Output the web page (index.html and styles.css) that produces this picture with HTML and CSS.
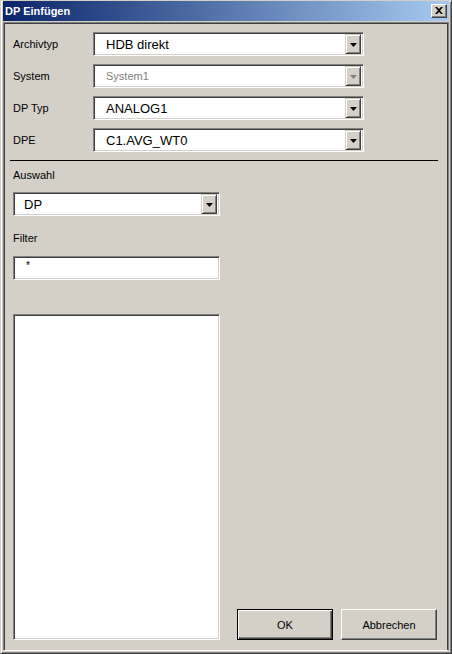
FILE: index.html
```html
<!DOCTYPE html>
<html lang="de">
<head>
    <meta charset="UTF-8">
    <title>DP Einfügen</title>
    <link rel="stylesheet" href="styles.css">
</head>
<body>
    <div class="window">
        <div class="titlebar">
            <span class="title">DP Einfügen</span>
            <span class="close">
                <svg width="8" height="7" viewBox="0 0 8 7"><path d="M0 0h2l2 2 2-2h2L5 3.5 8 7H6L4 5 2 7H0l3-3.5z" fill="#000"/></svg>
            </span>
        </div>
        <div class="client">
            <div class="form">
                <span class="label">Archivtyp</span>
                <div class="combo"><span class="value">HDB direkt</span><span class="arrow"><svg width="7" height="4" viewBox="0 0 7 4"><path d="M0 0h7L3.5 4z" fill="#000"/></svg></span></div>

                <span class="label">System</span>
                <div class="combo disabled"><span class="value">System1</span><span class="arrow"><svg width="7" height="4" viewBox="0 0 7 4"><path d="M0 0h7L3.5 4z" fill="#808080"/></svg></span></div>

                <span class="label">DP Typ</span>
                <div class="combo"><span class="value">ANALOG1</span><span class="arrow"><svg width="7" height="4" viewBox="0 0 7 4"><path d="M0 0h7L3.5 4z" fill="#000"/></svg></span></div>

                <span class="label">DPE</span>
                <div class="combo"><span class="value">C1.AVG_WT0</span><span class="arrow"><svg width="7" height="4" viewBox="0 0 7 4"><path d="M0 0h7L3.5 4z" fill="#000"/></svg></span></div>
            </div>

            <div class="separator"></div>

            <div class="lower">
                <div class="left">
                    <div class="caption">Auswahl</div>
                    <div class="combo narrow"><span class="value">DP</span><span class="arrow"><svg width="7" height="4" viewBox="0 0 7 4"><path d="M0 0h7L3.5 4z" fill="#000"/></svg></span></div>
                    <div class="caption filter-caption">Filter</div>
                    <div class="field">*</div>
                    <div class="listbox"></div>
                </div>
                <div class="buttons">
                    <button class="btn default">OK</button>
                    <button class="btn">Abbrechen</button>
                </div>
            </div>
        </div>
    </div>
</body>
</html>
```

FILE: styles.css
```css
body {
    margin: 0;
    padding: 0;
    background-color: #d4d0c8;
    font-family: "Liberation Sans", Arial, sans-serif;
    color: #000;
}
.window {
    width: 452px;
    height: 654px;
    box-sizing: border-box;
    background-color: #d4d0c8;
    border: 1px solid;
    border-color: #d4d0c8 #404040 #404040 #d4d0c8;
    box-shadow: inset 1px 1px #fff, inset -1px -1px #808080;
    padding: 0 2px 2px 2px;
    display: flex;
    flex-direction: column;
}
.titlebar {
    height: 20px;
    background: linear-gradient(to right, #0a246a, #a6caf0);
    display: flex;
    align-items: center;
    justify-content: space-between;
    padding: 0 2px 0 2px;
}
.title {
    color: #fff;
    font-weight: bold;
    font-size: 11px;
}
.close {
    width: 16px;
    height: 14px;
    box-sizing: border-box;
    background-color: #d4d0c8;
    border: 1px solid;
    border-color: #fff #404040 #404040 #fff;
    box-shadow: inset -1px -1px #808080;
    display: flex;
    align-items: center;
    justify-content: center;
}
.close svg {
    display: block;
    margin: 0 1px 1px 0;
}
.client {
    flex: 1;
    margin-top: 1px;
    border: 1px solid;
    border-color: #808080 #808080 #fff #808080;
    box-shadow: inset 1px 1px #404040, inset -1px 0 #404040, inset 0 -1px #d4d0c8;
    padding: 1px;
    min-height: 0;
    display: flex;
    flex-direction: column;
}
.form {
    display: grid;
    grid-template-columns: 80px 271px;
    grid-auto-rows: 24px;
    row-gap: 8px;
    padding: 8px 0 0 8px;
    align-items: center;
}
.label, .caption {
    font-size: 11px;
    line-height: 13px;
}
.combo {
    height: 24px;
    box-sizing: border-box;
    background-color: #fff;
    border: 1px solid;
    border-color: #808080 #fff #fff #808080;
    box-shadow: inset 1px 1px #404040, inset -1px -1px #d4d0c8;
    padding: 2px;
    display: flex;
    align-items: center;
}
.combo .value {
    flex: 1;
    font-size: 13px;
    padding-left: 10px;
}
.combo.disabled .value {
    font-size: 11px;
    color: #808080;
}
.arrow {
    width: 16px;
    height: 20px;
    box-sizing: border-box;
    background-color: #d4d0c8;
    border: 1px solid;
    border-color: #d4d0c8 #404040 #404040 #d4d0c8;
    box-shadow: inset 1px 1px #fff, inset -1px -1px #808080;
    display: flex;
    align-items: center;
    justify-content: center;
}
.arrow svg {
    display: block;
    margin-top: 1px;
}
.separator {
    height: 1px;
    background-color: #000;
    margin: 8px 0 0 5px;
    width: 428px;
}
.lower {
    flex: 1;
    display: flex;
    padding: 0 10px 0 8px;
}
.left {
    width: 207px;
    display: flex;
    flex-direction: column;
}
.caption {
    margin-top: 8px;
}
.combo.narrow {
    margin-top: 10px;
}
.combo.narrow .value {
    padding-left: 8px;
}
.filter-caption {
    margin-top: 16px;
}
.field {
    margin-top: 11px;
    height: 24px;
    box-sizing: border-box;
    background-color: #fff;
    border: 1px solid;
    border-color: #808080 #fff #fff #808080;
    box-shadow: inset 1px 1px #404040, inset -1px -1px #d4d0c8;
    font-size: 10px;
    line-height: 12px;
    padding: 3px 0 0 12px;
}
.listbox {
    margin-top: 34px;
    height: 326px;
    box-sizing: border-box;
    background-color: #fff;
    border: 1px solid;
    border-color: #808080 #fff #fff #808080;
    box-shadow: inset 1px 1px #404040, inset -1px -1px #d4d0c8;
}
.buttons {
    flex: 1;
    display: flex;
    justify-content: flex-end;
    align-items: flex-end;
    gap: 8px;
    padding-bottom: 9px;
}
.btn {
    width: 96px;
    height: 31px;
    box-sizing: border-box;
    background-color: #d4d0c8;
    border: 1px solid;
    border-color: #fff #404040 #404040 #fff;
    box-shadow: inset -1px -1px #808080;
    font-family: "Liberation Sans", Arial, sans-serif;
    font-size: 11px;
    color: #000;
    padding: 0;
    margin: 0;
}
.btn.default {
    border-color: #000;
    box-shadow: inset 1px 1px #fff, inset -1px -1px #404040, inset -2px -2px #808080;
}
```
